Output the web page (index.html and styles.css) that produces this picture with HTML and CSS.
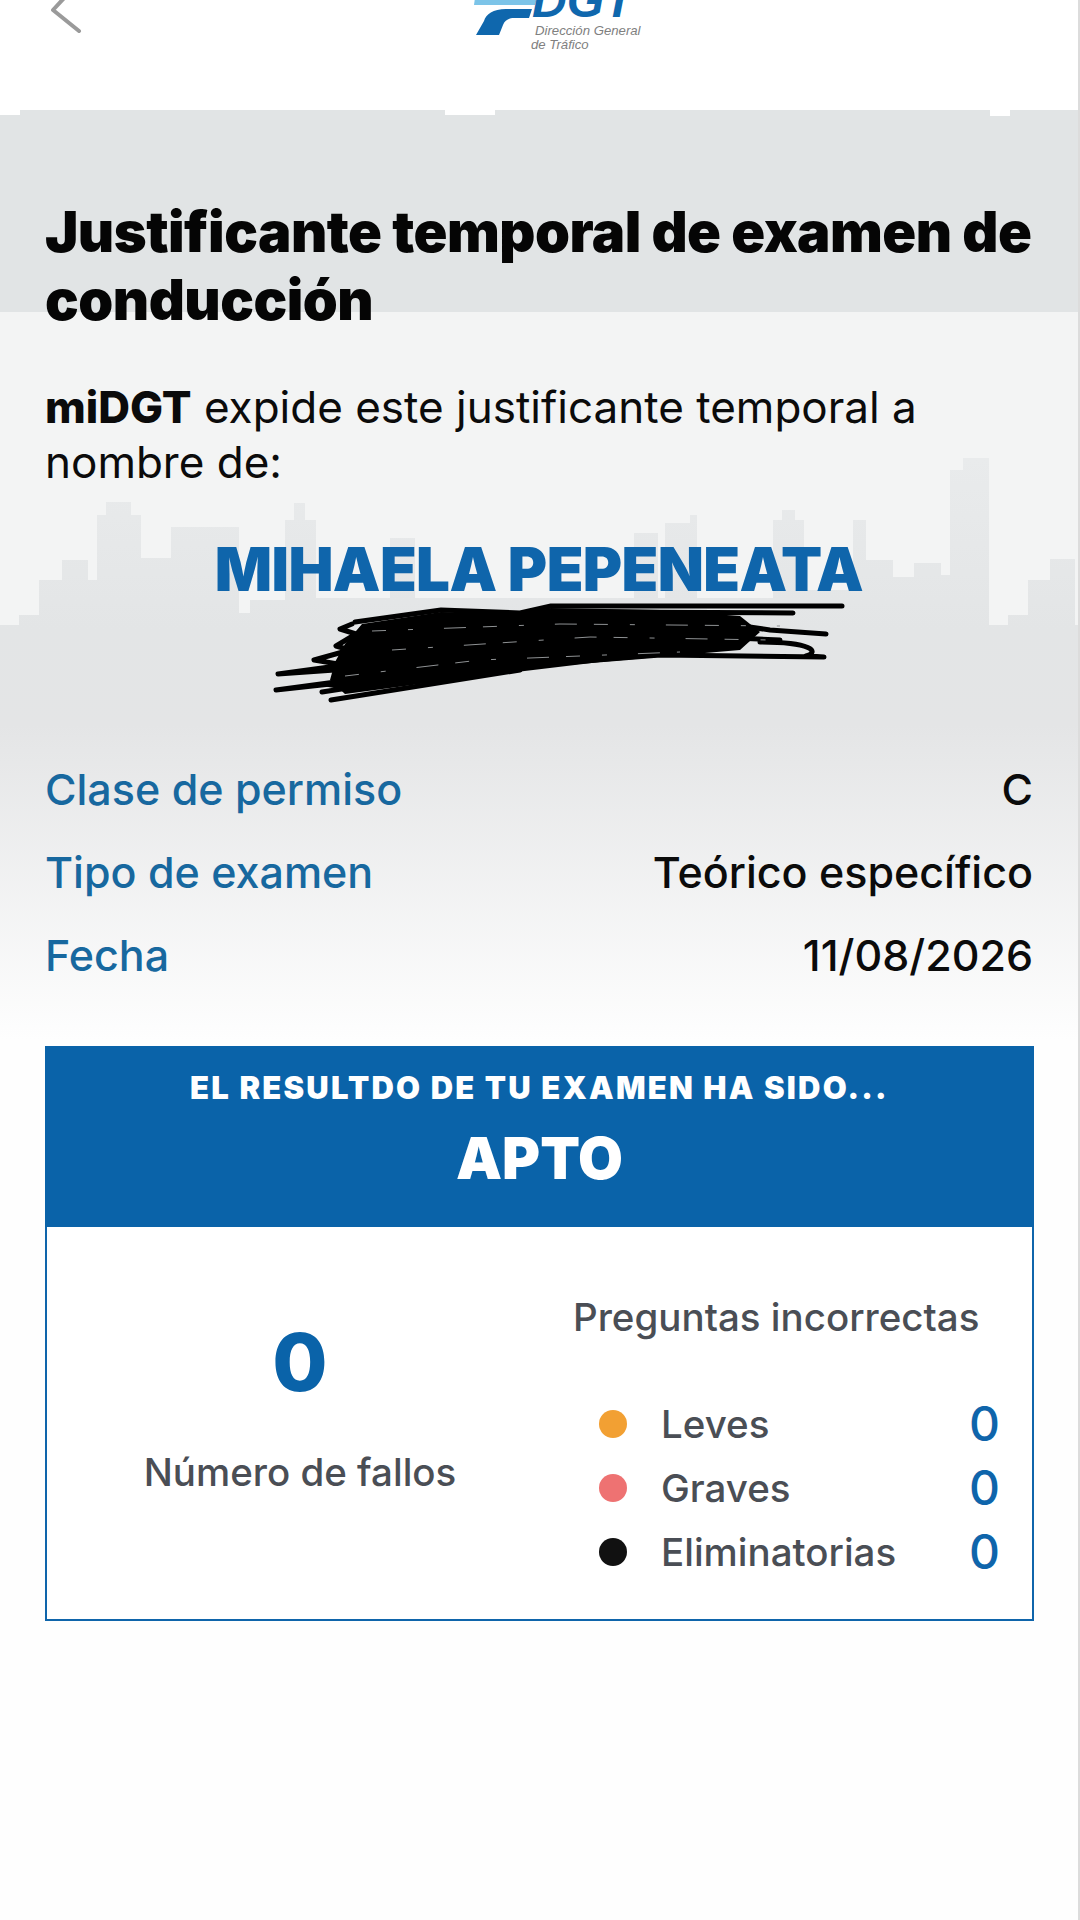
FILE: index.html
```html
<!DOCTYPE html>
<html lang="es">

<head>
    <meta charset="UTF-8">
    <meta name="viewport" content="width=device-width, initial-scale=1.0">
    <title>Justificante temporal de examen</title>
    <link rel="stylesheet" href="styles.css">
</head>

<body>
    <div class="page">
        <header class="top-bar">
            <svg class="top-bar-art" width="1078" height="110" viewBox="0 0 1078 110">
                <!-- back arrow, cut by the top of the screen -->
                <path d="M66 -4 L53 10 L79 31" fill="none" stroke="#9a9a9a" stroke-width="4" stroke-linecap="round" stroke-linejoin="round"/>
                <!-- DGT logo -->
                <polygon points="475,-2 537,-2 535,5 474,5" fill="#7cc4e8"/>
                <path d="M532 9 L506 9 C493 9 486 14 484 21 L476 35 L499 35 L503 25 C505 20 509 18 514 18 L529 18 Z" fill="#0f67ad"/>
                <text class="logo-mark" x="532" y="17">DGT</text>
                <text class="logo-sub" x="535" y="35">Dirección General</text>
                <text class="logo-sub" x="531" y="49">de Tráfico</text>
            </svg>
        </header>

        <section class="hero">
            <svg class="skyline" width="1078" height="520" viewBox="0 110 1078 520">
                <defs>
                    <linearGradient id="city-fade" gradientUnits="userSpaceOnUse" x1="0" y1="458" x2="0" y2="630">
                        <stop offset="0" stop-color="#e9ebec"/>
                        <stop offset="1" stop-color="#e3e5e6"/>
                    </linearGradient>
                </defs>
                <path fill="#fff" d="M0 110H20V115H0ZM445 110H495V115H445ZM990 110H1010V116H990Z"/>
                <path fill="url(#city-fade)" d="M0 630V625H19V615H39V580H62V560H88V580H97V515H106V502H131V515H141V558H171V527H239V613H250V600H285V520H294V503H305V520H316V598H390V538H415V598H634V533H658V598H665V523H690V515H697V598H773V520H782V510H795V520H804V590H853V520H866V560H893V577H914V563H941V575H950V470H963V458H989V625H1008V615H1028V580H1050V559H1075V630Z"/>
            </svg>

            <h1 class="title">Justificante temporal de examen de conducción</h1>
            <p class="intro"><strong>miDGT</strong> expide este justificante temporal a nombre de:</p>
            <div class="holder">MIHAELA PEPENEATA</div>

            <!-- pen scribble over the hidden text -->
            <svg class="scribble" width="580" height="105" viewBox="270 600 580 105">
                <path fill="#000" d="M362 624 L441 612 L520 614 L551 608 L660 610 L740 616 L760 632 L740 650 L600 662 L500 674 L420 684 L345 694 L330 680 L335 662 L345 644 Z"/>
                <g fill="none" stroke="#000" stroke-width="5" stroke-linecap="round" stroke-linejoin="round">
                    <path d="M842 606 L620 606 L551 606 L520 613 L441 610 L355 622"/>
                    <path d="M793 613 L610 612"/>
                    <path d="M826 634 L770 630 L715 622 L640 622"/>
                    <path d="M780 640 L640 634"/>
                    <path d="M760 642 C812 642 820 652 806 656 L824 657 L660 655 L560 663"/>
                    <path d="M352 624 L340 629 L356 634 L336 646 L350 650 L314 660 L338 664"/>
                    <path d="M440 652 L278 674 L420 664"/>
                    <path d="M470 664 L276 690 L440 672"/>
                    <path d="M331 700 L520 670"/>
                    <path d="M326 684 L348 688 L322 692"/>
                </g>
                <g fill="none" stroke="#8f9294" stroke-width="1" stroke-dasharray="14 22 5 31 22 17">
                    <path d="M372 631 L560 624 L780 626"/>
                    <path d="M392 650 L590 637 L770 640"/>
                    <path d="M345 676 L480 660 L680 652"/>
                </g>
            </svg>

            <dl class="facts">
                <div class="fact">
                    <dt>Clase de permiso</dt>
                    <dd>C</dd>
                </div>
                <div class="fact">
                    <dt>Tipo de examen</dt>
                    <dd>Teórico específico</dd>
                </div>
                <div class="fact">
                    <dt>Fecha</dt>
                    <dd>11/08/2026</dd>
                </div>
            </dl>
        </section>

        <section class="result">
            <div class="result-head">
                <div class="result-lead">EL RESULTDO DE TU EXAMEN HA SIDO...</div>
                <div class="result-value">APTO</div>
            </div>
            <div class="result-body">
                <div class="fails">
                    <div class="fails-num">0</div>
                    <div class="fails-label">Número de fallos</div>
                </div>
                <div class="wrong">
                    <div class="wrong-title">Preguntas incorrectas</div>
                    <ul class="wrong-list">
                        <li class="wrong-item"><span class="dot dot-minor"></span><span class="wrong-name">Leves</span><span class="wrong-num">0</span></li>
                        <li class="wrong-item"><span class="dot dot-major"></span><span class="wrong-name">Graves</span><span class="wrong-num">0</span></li>
                        <li class="wrong-item"><span class="dot dot-fatal"></span><span class="wrong-name">Eliminatorias</span><span class="wrong-num">0</span></li>
                    </ul>
                </div>
            </div>
        </section>
    </div>
</body>

</html>
```

FILE: styles.css
```css
* {
    box-sizing: border-box;
}

body {
    margin: 0;
    font-family: Inter, "Liberation Sans", sans-serif;
    background: #fff;
    color: #0b0b0b;
}

.page {
    width: 1080px;
    height: 1920px;
    overflow: hidden;
    border-right: 2px solid #dcdcdc;
    background: #fefefe;
}

.top-bar {
    height: 110px;
    background: #fff;
}

.top-bar-art {
    display: block;
}

.logo-mark {
    font-family: "Liberation Sans", sans-serif;
    font-size: 48px;
    font-style: italic;
    font-weight: bold;
    fill: #0f67ad;
}

.logo-sub {
    font-family: "Liberation Sans", sans-serif;
    font-size: 13.2px;
    font-style: italic;
    fill: #808080;
}

.hero {
    position: relative;
    height: 936px;
    padding: 88px 45px 0;
    background: linear-gradient(#e1e4e5 0, #e1e4e5 202px, #f3f4f4 202px, #f3f4f4 515px, #e3e5e6 515px, #e4e5e6 615px, #fefefe 930px);
}

.skyline {
    position: absolute;
    top: 0;
    left: 0;
}

.title,
.intro,
.holder,
.facts {
    position: relative;
}

.title {
    margin: 0;
    font-size: 56px;
    line-height: 68px;
    font-weight: 900;
    letter-spacing: -0.5px;
    color: #050505;
}

.intro {
    margin: 46px 0 0;
    font-size: 44px;
    line-height: 55px;
}

.intro strong {
    font-weight: 800;
}

.holder {
    margin-top: 44px;
    text-align: center;
    font-size: 60px;
    line-height: 70px;
    font-weight: 900;
    letter-spacing: -0.6px;
    color: #0f65ab;
}

.scribble {
    position: absolute;
    top: 490px;
    left: 270px;
}

.facts {
    margin: 144px 0 0;
}

.fact {
    display: flex;
    justify-content: space-between;
    font-size: 43px;
    line-height: 83px;
}

.fact dt {
    font-weight: 500;
    color: #17689f;
}

.fact dd {
    margin: 0;
    font-weight: 500;
}

.result {
    width: 989px;
    height: 575px;
    margin-left: 45px;
    border: 2px solid #0f65ab;
    border-top: 0;
    background: #fff;
}

.result-head {
    height: 181px;
    margin: 0 -2px;
    padding-top: 20px;
    background: #0a63a9;
    color: #fff;
    text-align: center;
}

.result-lead {
    font-size: 31px;
    line-height: 44px;
    font-weight: 900;
    letter-spacing: 2.2px;
}

.result-value {
    margin-top: 14px;
    font-size: 58px;
    line-height: 68px;
    font-weight: 900;
}

.result-body {
    display: flex;
    padding-top: 66px;
}

.fails {
    width: 506px;
    padding-top: 21px;
    text-align: center;
}

.fails-num {
    font-size: 80px;
    line-height: 96px;
    font-weight: 800;
    color: #0a63a9;
}

.fails-label,
.wrong-title,
.wrong-name {
    font-size: 38.5px;
    font-weight: 500;
    color: #4a4e55;
}

.fails-label {
    margin-top: 37px;
    line-height: 50px;
}

.wrong {
    width: 445px;
    padding-left: 20px;
}

.wrong-title {
    margin-top: -1px;
    line-height: 50px;
}

.wrong-list {
    list-style: none;
    margin: 50px 0 0;
    padding: 0;
}

.wrong-item {
    display: flex;
    align-items: center;
    height: 64px;
    padding-left: 26px;
}

.dot {
    width: 28px;
    height: 28px;
    margin-right: 34px;
    border-radius: 50%;
}

.dot-minor {
    background: #f2a033;
}

.dot-major {
    background: #ee7272;
}

.dot-fatal {
    background: #111;
}

.wrong-name {
    flex: 1;
}

.wrong-num {
    margin-right: -2px;
    font-size: 48px;
    font-weight: 500;
    line-height: 64px;
    color: #0f65ab;
}
```
